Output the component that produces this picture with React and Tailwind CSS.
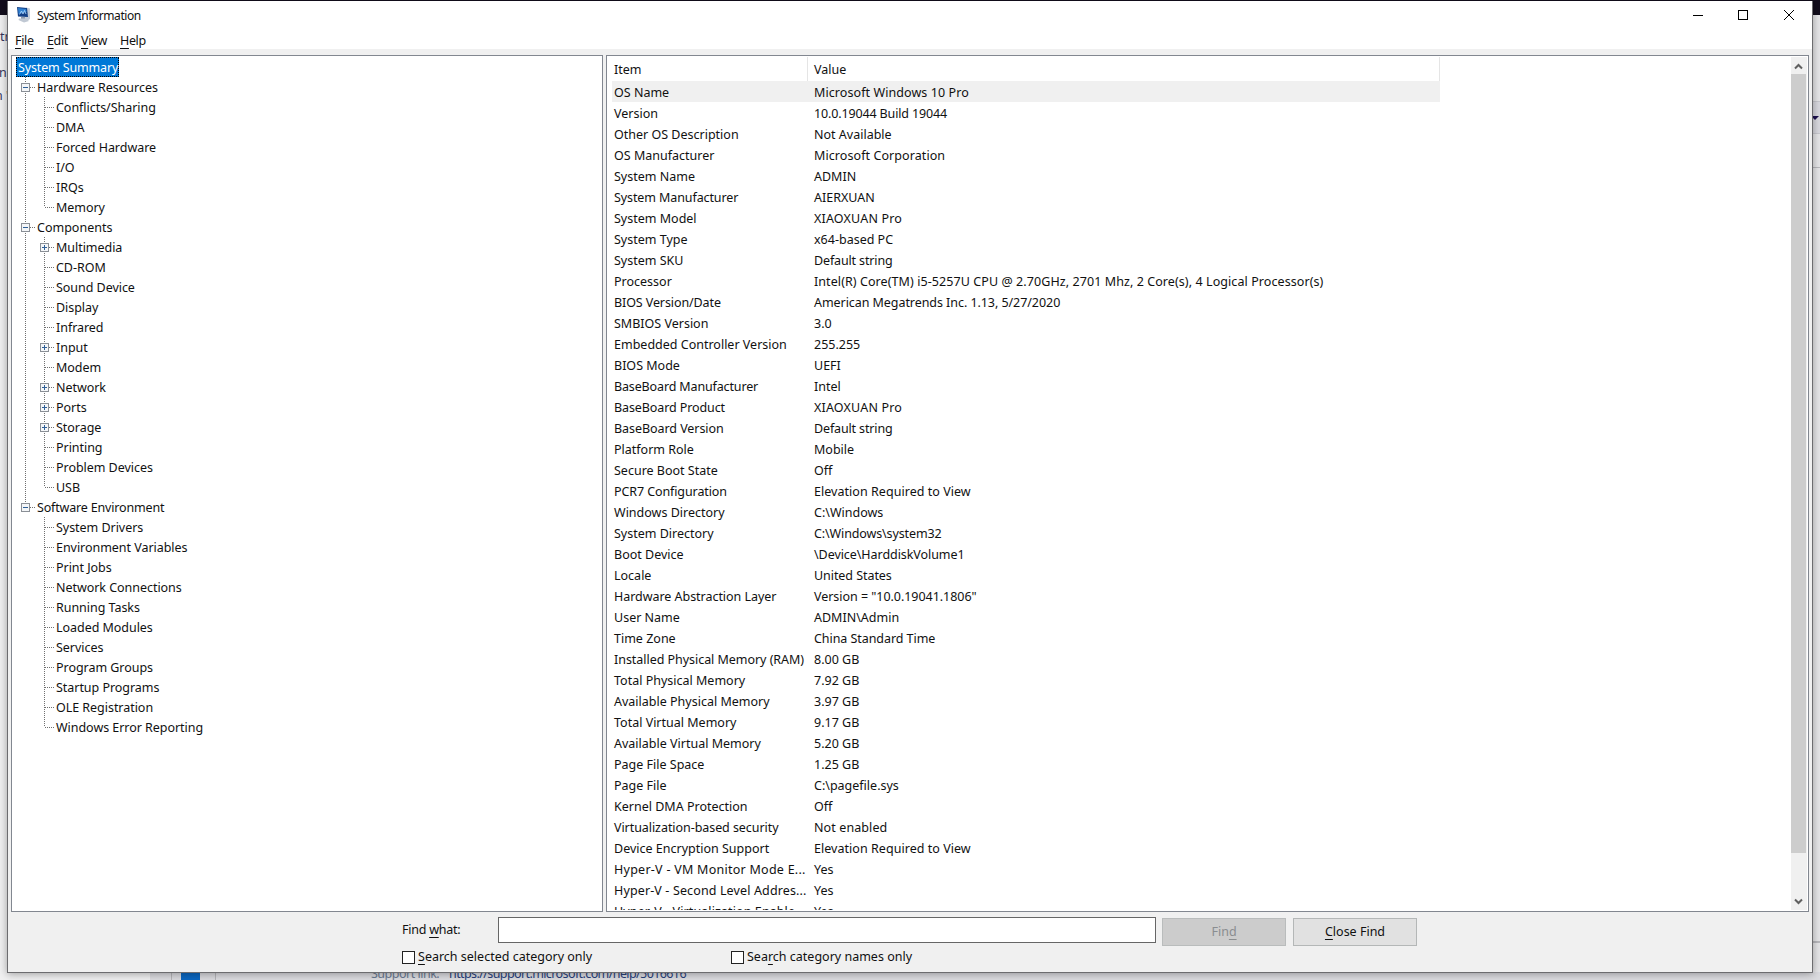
const FONT = "font-['Noto_Sans','Open_Sans',sans-serif]";

const tree = [
  ['Hardware Resources', ['Conflicts/Sharing', 'DMA', 'Forced Hardware', 'I/O', 'IRQs', 'Memory']],
  ['Components', ['+Multimedia', 'CD-ROM', 'Sound Device', 'Display', 'Infrared', '+Input', 'Modem', '+Network', '+Ports', '+Storage', 'Printing', 'Problem Devices', 'USB']],
  ['Software Environment', ['System Drivers', 'Environment Variables', 'Print Jobs', 'Network Connections', 'Running Tasks', 'Loaded Modules', 'Services', 'Program Groups', 'Startup Programs', 'OLE Registration', 'Windows Error Reporting']],
];

const rows = [
  ['OS Name', 'Microsoft Windows 10 Pro', '', 'tracking-[0.08px]'],
  ['Version', '10.0.19044 Build 19044', '', 'tracking-[-0.14px]'],
  ['Other OS Description', 'Not Available'],
  ['OS Manufacturer', 'Microsoft Corporation', '', 'tracking-[0.08px]'],
  ['System Name', 'ADMIN'],
  ['System Manufacturer', 'AIERXUAN', 'tracking-[-0.1px]'],
  ['System Model', 'XIAOXUAN Pro', '', 'tracking-[0.18px]'],
  ['System Type', 'x64-based PC'],
  ['System SKU', 'Default string', '', 'tracking-[-0.14px]'],
  ['Processor', 'Intel(R) Core(TM) i5-5257U CPU @ 2.70GHz, 2701 Mhz, 2 Core(s), 4 Logical Processor(s)', '', 'tracking-[0.08px]'],
  ['BIOS Version/Date', 'American Megatrends Inc. 1.13, 5/27/2020', 'tracking-[-0.1px]', 'tracking-[-0.06px]'],
  ['SMBIOS Version', '3.0'],
  ['Embedded Controller Version', '255.255'],
  ['BIOS Mode', 'UEFI'],
  ['BaseBoard Manufacturer', 'Intel', 'tracking-[-0.14px]'],
  ['BaseBoard Product', 'XIAOXUAN Pro', 'tracking-[-0.1px]', 'tracking-[0.18px]'],
  ['BaseBoard Version', 'Default string', 'tracking-[-0.06px]', 'tracking-[-0.14px]'],
  ['Platform Role', 'Mobile'],
  ['Secure Boot State', 'Off'],
  ['PCR7 Configuration', 'Elevation Required to View', 'tracking-[-0.1px]', 'tracking-[0.04px]'],
  ['Windows Directory', 'C:\\Windows'],
  ['System Directory', 'C:\\Windows\\system32', '', 'tracking-[-0.12px]'],
  ['Boot Device', '\\Device\\HarddiskVolume1', '', 'tracking-[-0.06px]'],
  ['Locale', 'United States', '', 'tracking-[-0.06px]'],
  ['Hardware Abstraction Layer', 'Version = "10.0.19041.1806"', 'tracking-[-0.04px]', 'tracking-[-0.04px]'],
  ['User Name', 'ADMIN\\Admin'],
  ['Time Zone', 'China Standard Time', '', 'tracking-[-0.06px]'],
  ['Installed Physical Memory (RAM)', '8.00 GB', 'tracking-[-0.04px]'],
  ['Total Physical Memory', '7.92 GB'],
  ['Available Physical Memory', '3.97 GB'],
  ['Total Virtual Memory', '9.17 GB'],
  ['Available Virtual Memory', '5.20 GB'],
  ['Page File Space', '1.25 GB'],
  ['Page File', 'C:\\pagefile.sys'],
  ['Kernel DMA Protection', 'Off'],
  ['Virtualization-based security', 'Not enabled', 'tracking-[-0.06px]', 'tracking-[0.1px]'],
  ['Device Encryption Support', 'Elevation Required to View', '', 'tracking-[0.04px]'],
  ['Hyper-V - VM Monitor Mode E...', 'Yes', 'tracking-[0.26px]'],
  ['Hyper-V - Second Level Addres...', 'Yes', 'tracking-[0.13px]'],
  ['Hyper-V - Virtualization Enable...', 'Yes', 'tracking-[0.1px]'],
];

function Accel({ text, at }) {
  return (
    <span className="whitespace-pre">
      {text.slice(0, at)}
      <span className="underline decoration-1 underline-offset-[3px] [text-decoration-skip-ink:none]">{text[at]}</span>
      {text.slice(at + 1)}
    </span>
  );
}

/* 19px wide tree gutter cell: dotted trunk, branch and optional expander box. */
function Gutter({ up, down, branch, box }) {
  return (
    <svg width="19" height="20" className="shrink-0" shapeRendering="crispEdges">
      <g stroke="#707070" strokeDasharray="1 1">
        {up && <path d="M7.5 0V10" />}
        {down && <path d="M7.5 10V20" />}
        {branch && <path d="M8 10.5H17" />}
      </g>
      {box && (
        <g>
          <rect x="3.5" y="6.5" width="8" height="8" fill="#f4f6f8" stroke="#8a8f96" />
          <path d="M5 10.5H10" stroke="#2f5f96" />
          {box === '+' && <path d="M7.5 8V13" stroke="#2f5f96" />}
        </g>
      )}
    </svg>
  );
}

function Tree() {
  return (
    <div className="h-[857px] w-[592px] shrink-0 overflow-hidden border border-[#828790] bg-white pt-px pl-1">
      <div className="flex h-5 w-[103px] items-center border border-dotted border-black bg-[#0078d7] pt-0.5 pl-px leading-none tracking-[-0.15px] whitespace-nowrap text-white">System Summary</div>
      <div className="pl-0.5">
        {tree.map(([name, kids], g) => {
          const last = g === tree.length - 1;
          return (
            <div key={name}>
              <div className="flex h-5 items-center">
                <Gutter up down={!last} branch box="-" />
                <span className={`pt-0.5 leading-none whitespace-nowrap ${last ? 'tracking-[-0.17px]' : ''}`}>{name}</span>
              </div>
              {kids.map((kid, i) => {
                const plus = kid[0] === '+';
                return (
                  <div key={kid} className="flex h-5 items-center">
                    <Gutter up={!last} down={!last} />
                    <Gutter up down={i < kids.length - 1} branch box={plus ? '+' : undefined} />
                    <span className="pt-0.5 leading-none tracking-[-0.04px] whitespace-nowrap">{plus ? kid.slice(1) : kid}</span>
                  </div>
                );
              })}
            </div>
          );
        })}
      </div>
    </div>
  );
}

function Details() {
  return (
    <div className="flex h-[857px] w-[1203px] shrink-0 justify-between overflow-hidden border border-[#828790] bg-white py-px pr-px pl-[5px]">
      <div className="h-[853px] w-[828px] overflow-hidden">
        <div className="flex h-6 items-center leading-none">
          <span className="flex h-full w-[196px] items-center border-r border-[#e5e5e5] pt-0.5 pl-0.5">Item</span>
          <span className="flex h-full grow items-center border-r border-[#e5e5e5] pt-0.5 pl-1.5">Value</span>
        </div>
        {rows.map(([item, value, itemFit, valueFit], i) => (
          <div key={item} className={`flex h-[21px] items-center pt-[3px] leading-none whitespace-nowrap ${i === 0 ? 'bg-[#f0f0f0]' : ''}`}>
            <span className={`w-[202px] shrink-0 pl-0.5 ${itemFit || ''}`}>{item}</span>
            <span className={valueFit}>{value}</span>
          </div>
        ))}
      </div>
      <div className="flex w-4 flex-col bg-[#f0f0f0]">
        <svg width="16" height="17" fill="none" stroke="#606060" strokeWidth="2" className="shrink-0"><path d="M4 11.5L7.5 8L11 11.5" /></svg>
        <div className="h-[779px] w-[15px] bg-[#cdcdcd]" />
        <div className="grow" />
        <svg width="16" height="17" fill="none" stroke="#606060" strokeWidth="2" className="shrink-0"><path d="M4 6.5L7.5 10L11 6.5" /></svg>
      </div>
    </div>
  );
}

function Check({ text, at, className }) {
  return (
    <div className={`flex items-center gap-[3px] ${className}`}>
      <span className="size-[13px] border border-[#222] bg-white" />
      <span className="leading-4"><Accel text={text} at={at} /></span>
    </div>
  );
}

function Backdrop() {
  return (
    <div className="absolute inset-0 bg-[#e6e6e8] text-[#35355c]">
      <div className="h-[15px] bg-[#120d1c]" />
      <div className="h-[965px] w-[150px] bg-[#f0f0f1]" />
      <span className="absolute top-[29px] left-0">tr</span>
      <span className="absolute top-[65px] -left-px">ns</span>
      <span className="absolute top-[88px] -left-[5px]">n '</span>
      <div className="absolute top-[101px] right-0 h-[33px] w-2 border-y border-[#c9c9cf] bg-[#d9d9df]" />
      <div className="absolute top-[167px] right-0 h-px w-2 bg-[#b9b9bd]" />
      <svg className="absolute top-[116px] left-[1811px]" width="8" height="5"><path d="M0 0H8L4 4Z" fill="#1d1150" /></svg>
      <div className="absolute top-[941px] right-0 h-0.5 w-2 bg-[#b9b9bd]" />
      <div className="absolute bottom-0 left-[150px] h-2 w-[1670px] bg-[#dcdce0]" />
      <div className="absolute bottom-0 left-[171px] h-2 w-[45px] border-x border-[#b5b5b9] bg-[#dadade]" />
      <div className="absolute bottom-0 left-[181px] h-2 w-[19px] bg-[#0a66c0]" />
      <span className="absolute top-[966px] left-[371px] tracking-[-0.5px] text-[#6b7a92]">Support link:</span>
      <span className="absolute top-[966px] left-[449px] tracking-[-0.6px] text-[#28407c]">https://support.microsoft.com/help/5016616</span>
    </div>
  );
}

export default function App() {
  return (
    <div className={`relative h-[980px] w-[1820px] overflow-hidden text-[12.5px] leading-4 text-[#111] ${FONT}`}>
      <Backdrop />
      <div className="absolute top-px left-[7px] flex h-[972px] w-[1806px] flex-col border border-t-0 border-[#6c6c6f] bg-[#f0f0f0] shadow-[0_1px_8px_rgba(0,0,0,0.35)]">
        <div className="flex h-[29px] shrink-0 items-center bg-white pl-2">
          <svg width="16" height="16" viewBox="0 0 16 16" className="-mt-px">
            <path d="M10 0.5L14 1.5V12L11 14L9 12Z" fill="#c3ccd8" />
            <path d="M1 0L11 1L12 10L2 9.5Z" fill="#123f86" />
            <path d="M2 1L10 2L10.5 5L2.6 7Z" fill="#2f7fd0" />
            <path d="M3.5 7.5L5.5 4L7 7L8.5 3.5L10 7" fill="none" stroke="#b5dcff" strokeWidth="0.8" />
            <path d="M5 10H9V12H5Z" fill="#8f9bad" />
            <path d="M3 11.5L10 11.5L13 14L8 15.5L2.5 13Z" fill="#c0c8d3" />
          </svg>
          <span className="ml-[5px] grow pt-px text-[12px] tracking-[-0.45px]">System Information</span>
          <svg width="103" height="12" className="mt-2 mr-4 self-start" fill="none" stroke="#000" shapeRendering="crispEdges">
            <path d="M0 6.5H10" />
            <rect x="45.5" y="1.5" width="9" height="9" />
            <path d="M91 1L101 11M101 1L91 11" shapeRendering="auto" />
          </svg>
        </div>
        <div className="flex h-[19px] shrink-0 items-center bg-white pt-0.5 pl-[7px] tracking-[-0.35px]">
          <span className="w-8"><Accel text="File" at={0} /></span>
          <span className="w-[34px]"><Accel text="Edit" at={0} /></span>
          <span className="w-[39px]"><Accel text="View" at={0} /></span>
          <Accel text="Help" at={0} />
        </div>
        <div className="flex shrink-0 gap-[3px] pt-1.5 pl-[3px]">
          <Tree />
          <Details />
        </div>
        <div className="flex shrink-0 pt-[5px] pl-[394px]">
          <span className="w-24 pt-[5px] tracking-[-0.25px]"><Accel text="Find what:" at={5} /></span>
          <div className="h-[26px] w-[658px] border border-[#666] bg-white" />
          <div className="mt-px ml-1.5 flex h-7 w-[124px] items-center justify-center border border-[#b9bcbc] bg-[#cccccc] text-[#8a8d90]"><Accel text="Find" at={3} /></div>
          <div className="mt-px ml-[7px] flex h-7 w-[124px] items-center justify-center border border-[#b4b7b7] bg-[#e1e1e1]"><Accel text="Close Find" at={0} /></div>
        </div>
        <div className="flex shrink-0 pt-[3px] pl-[394px]">
          <Check text="Search selected category only" at={0} className="w-[329px]" />
          <Check text="Search category names only" at={3} className="" />
        </div>
      </div>
    </div>
  );
}
